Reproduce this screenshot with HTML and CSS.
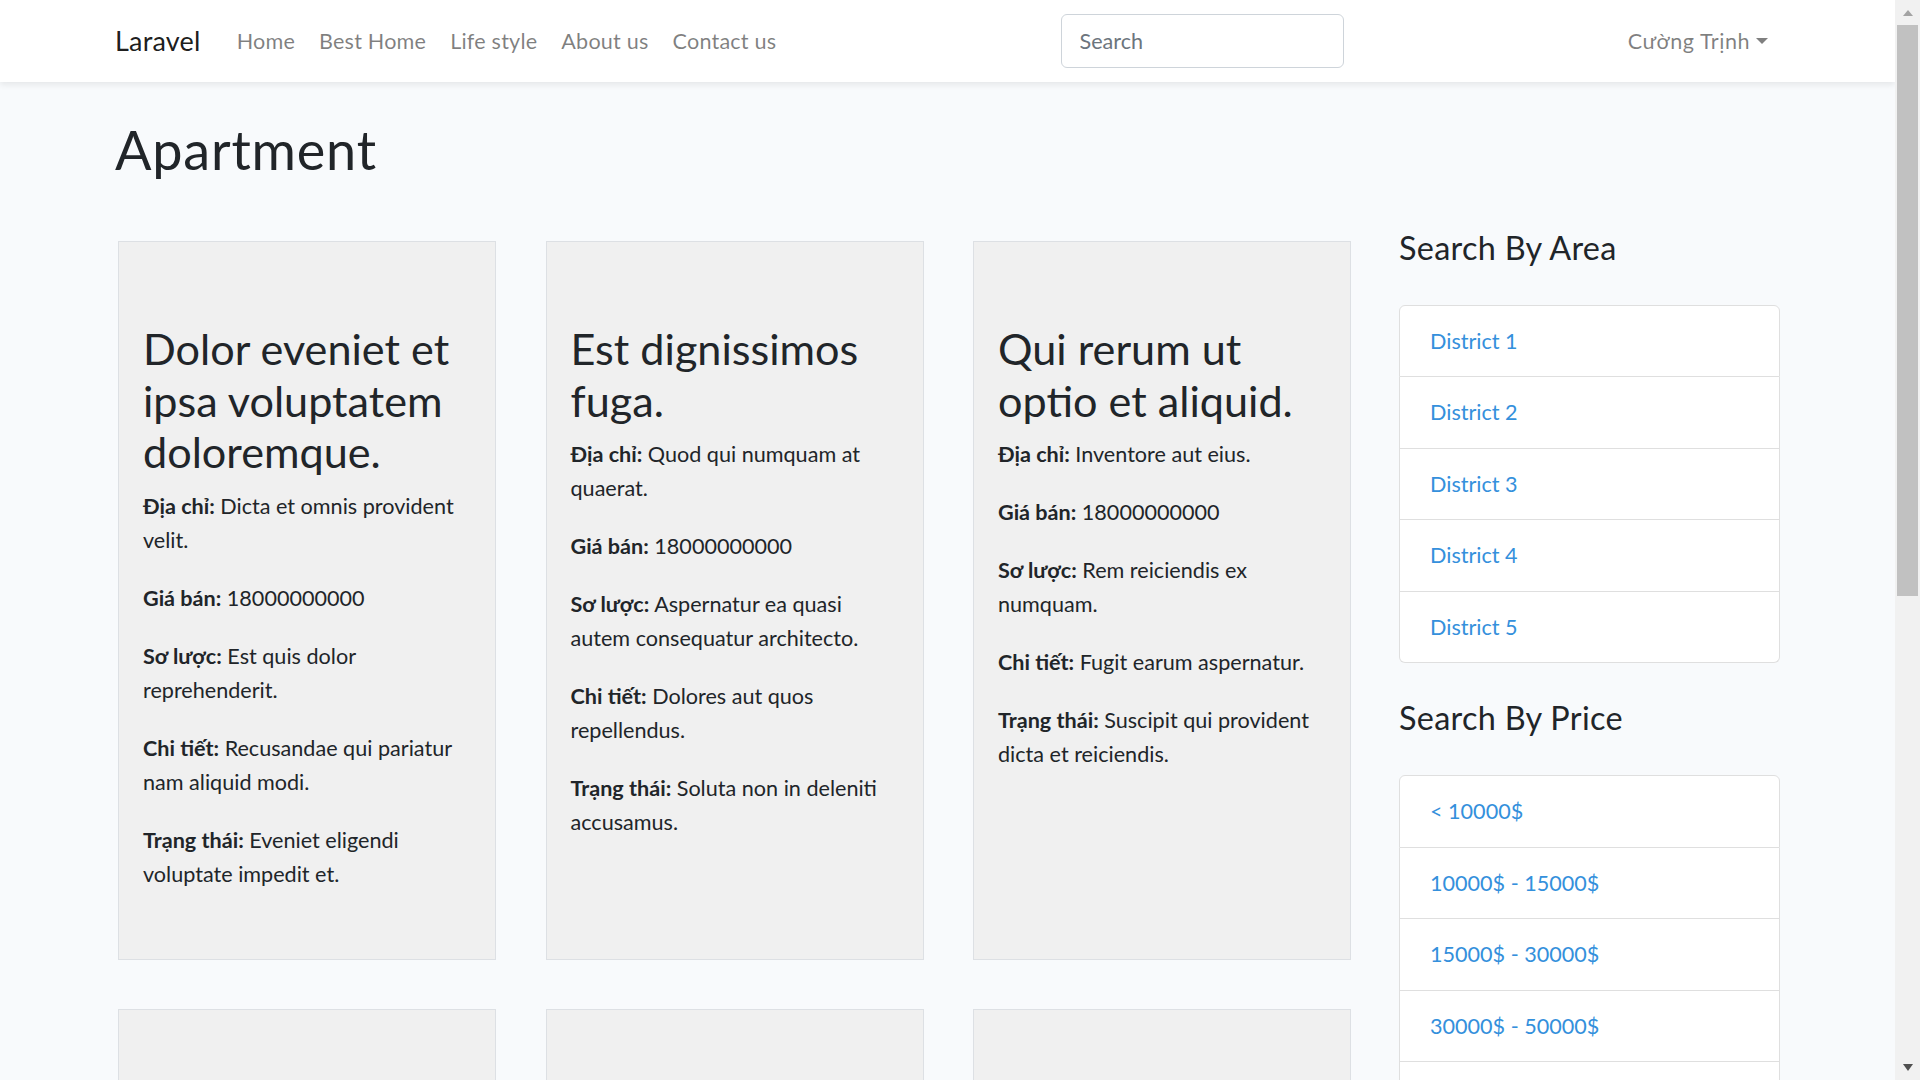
FILE: index.html
```html
<!DOCTYPE html>
<html lang="vi">
<head>
<meta charset="utf-8">
<title>Apartment</title>
<link rel="stylesheet" href="styles.css">
</head>
<body>
<div class="viewport">
  <div class="page">
    <nav class="navbar">
      <div class="container nav-inner">
        <a class="brand" href="#">Laravel</a>
        <ul class="nav-links">
          <li><a href="#">Home</a></li>
          <li><a href="#">Best Home</a></li>
          <li><a href="#">Life style</a></li>
          <li><a href="#">About us</a></li>
          <li><a href="#">Contact us</a></li>
        </ul>
        <form class="search">
          <input class="search-input" type="search" placeholder="Search">
        </form>
        <a class="user" href="#">Cường Trịnh</a>
      </div>
    </nav>

    <main class="main">
      <div class="container">
        <h1 class="page-title">Apartment</h1>
        <div class="layout">
          <div class="cards">
            <div class="card">
              <h2 class="card-title">Dolor eveniet et ipsa voluptatem doloremque.</h2>
              <p><b>Địa chỉ:</b> Dicta et omnis provident velit.</p>
              <p><b>Giá bán:</b> 18000000000</p>
              <p><b>Sơ lược:</b> Est quis dolor reprehenderit.</p>
              <p><b>Chi tiết:</b> Recusandae qui pariatur nam aliquid modi.</p>
              <p><b>Trạng thái:</b> Eveniet eligendi voluptate impedit et.</p>
            </div>
            <div class="card">
              <h2 class="card-title">Est dignissimos fuga.</h2>
              <p><b>Địa chỉ:</b> Quod qui numquam at quaerat.</p>
              <p><b>Giá bán:</b> 18000000000</p>
              <p><b>Sơ lược:</b> Aspernatur ea quasi autem consequatur architecto.</p>
              <p><b>Chi tiết:</b> Dolores aut quos repellendus.</p>
              <p><b>Trạng thái:</b> Soluta non in deleniti accusamus.</p>
            </div>
            <div class="card">
              <h2 class="card-title">Qui rerum ut optio et aliquid.</h2>
              <p><b>Địa chỉ:</b> Inventore aut eius.</p>
              <p><b>Giá bán:</b> 18000000000</p>
              <p><b>Sơ lược:</b> Rem reiciendis ex numquam.</p>
              <p><b>Chi tiết:</b> Fugit earum aspernatur.</p>
              <p><b>Trạng thái:</b> Suscipit qui provident dicta et reiciendis.</p>
            </div>
            <div class="card"></div>
            <div class="card"></div>
            <div class="card"></div>
          </div>

          <aside class="sidebar">
            <h4 class="side-title">Search By Area</h4>
            <div class="list">
              <a class="list-item" href="#">District 1</a>
              <a class="list-item" href="#">District 2</a>
              <a class="list-item" href="#">District 3</a>
              <a class="list-item" href="#">District 4</a>
              <a class="list-item" href="#">District 5</a>
            </div>
            <h4 class="side-title">Search By Price</h4>
            <div class="list">
              <a class="list-item" href="#">&lt; 10000$</a>
              <a class="list-item" href="#">10000$ - 15000$</a>
              <a class="list-item" href="#">15000$ - 30000$</a>
              <a class="list-item" href="#">30000$ - 50000$</a>
              <a class="list-item list-item-empty" href="#" aria-label="&gt; 50000$"></a>
            </div>
          </aside>
        </div>
      </div>
    </main>
  </div>

  <div class="scrollbar" aria-hidden="true">
    <div class="sb-btn sb-up"></div>
    <div class="sb-thumb"></div>
    <div class="sb-space"></div>
    <div class="sb-btn sb-down"></div>
  </div>
</div>
</body>
</html>
```

FILE: styles.css
```css
* {
  box-sizing: border-box;
}

html,
body {
  margin: 0;
  height: 100%;
}

body {
  font-family: Lato, "Noto Sans", sans-serif;
  font-size: 21.6px;
  line-height: 34px;
  color: #212529;
  background: #f8fafc;
  overflow: hidden;
}

.viewport {
  display: flex;
  height: 1080px;
  overflow: hidden;
}

.page {
  flex: 1;
  min-width: 0;
  overflow: hidden;
}

/* ---------- navbar ---------- */
.navbar {
  position: relative;
  z-index: 1;
  height: 82px;
  background: #fff;
  box-shadow: 0 3px 6px rgba(0, 0, 0, 0.075);
}

.container {
  width: 1665px;
  margin: 0 auto;
}

.nav-inner {
  display: flex;
  align-items: center;
  height: 100%;
}

.brand {
  font-size: 27px;
  line-height: 40.5px;
  color: rgba(0, 0, 0, 0.9);
  text-decoration: none;
  margin-right: 24px;
  letter-spacing: 0.2px;
}

.nav-links {
  display: flex;
  list-style: none;
  margin: 0;
  padding: 0;
}

.nav-links a {
  display: block;
  padding: 0 12px;
  color: rgba(0, 0, 0, 0.5);
  text-decoration: none;
  letter-spacing: 0.2px;
}

.search {
  margin: 0 auto;
}

.search-input {
  display: block;
  width: 283px;
  height: 54px;
  padding: 0 18px;
  font: inherit;
  color: #495057;
  background: #fff;
  border: 1px solid #ced4da;
  border-radius: 6px;
  outline: none;
}

.search-input::placeholder {
  color: #6c757d;
}

.user {
  padding: 0 12px;
  color: rgba(0, 0, 0, 0.5);
  text-decoration: none;
  letter-spacing: 0.5px;
}

.user::after {
  content: "";
  display: inline-block;
  margin-left: 6px;
  vertical-align: 5.5px;
  border-top: 6.5px solid;
  border-left: 6.5px solid transparent;
  border-right: 6.5px solid transparent;
}

/* ---------- main ---------- */
.main {
  padding-top: 36px;
}

.page-title {
  font-size: 54px;
  line-height: 64.8px;
  font-weight: 400;
  letter-spacing: 0.8px;
  margin: 0 0 58px;
}

.layout {
  display: grid;
  grid-template-columns: 1233px 381px;
  column-gap: 48px;
  padding-left: 3px;
  align-items: start;
}

.cards {
  display: grid;
  grid-template-columns: repeat(3, 378px);
  gap: 49.5px;
}

.card {
  min-height: 719px;
  padding: 81px 24px 40px;
  background: #f0f0f0;
  border: 1px solid #dde0e4;
}

.card-title {
  font-size: 43.2px;
  line-height: 51.8px;
  font-weight: 400;
  margin: 0 0 11px;
}

.card p {
  margin: 0 0 24px;
}

.card b {
  font-weight: 700;
}

/* ---------- sidebar ---------- */
.sidebar {
  margin-top: -12px;
}

.side-title {
  font-size: 32.4px;
  line-height: 38.9px;
  font-weight: 400;
  letter-spacing: 0.3px;
  margin: 0 0 37px;
}

.list {
  margin-bottom: 36px;
}

.list-item {
  display: block;
  padding: 18px 30px;
  line-height: 34.5px;
  color: #3490dc;
  text-decoration: none;
  background: #fff;
  border: 1px solid #dfdfdf;
  border-top-width: 0;
}

.list-item-empty {
  height: 71.5px;
}

.list-item:first-child {
  border-top-width: 1px;
  border-radius: 6px 6px 0 0;
}

.list-item:last-child {
  border-radius: 0 0 6px 6px;
}

/* ---------- scrollbar ---------- */
.scrollbar {
  flex: none;
  width: 25px;
  display: flex;
  flex-direction: column;
  align-items: center;
  background: #f1f1f1;
}

.sb-btn {
  flex: none;
  width: 100%;
  height: 25px;
  display: flex;
  align-items: center;
  justify-content: center;
}

.sb-up::before {
  content: "";
  border-bottom: 6px solid #a3a3a3;
  border-left: 5.5px solid transparent;
  border-right: 5.5px solid transparent;
}

.sb-down::before {
  content: "";
  border-top: 7px solid #505050;
  border-left: 5.5px solid transparent;
  border-right: 5.5px solid transparent;
}

.sb-thumb {
  flex: none;
  width: 21px;
  height: 571px;
  background: #c1c1c1;
}

.sb-space {
  flex: 1;
}
```
